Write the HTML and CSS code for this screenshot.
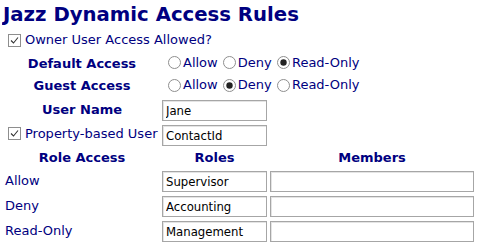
FILE: index.html
```html
<!DOCTYPE html>
<html lang="en">
<head>
    <meta charset="UTF-8">
    <meta name="viewport" content="width=device-width, initial-scale=1.0">
    <title>Jazz Dynamic Access Rules</title>
    <link rel="stylesheet" href="styles.css">
</head>
<body>
    <h1>Jazz Dynamic Access Rules</h1>
    <table class="rules">
        <tr class="first">
            <td colspan="3">
                <label class="check">
                    <svg class="box" width="13" height="13" viewBox="0 0 13 13"><rect x="0.5" y="0.5" width="12" height="12" fill="#fff" stroke="#8e8e8e"/><path d="M3 6.5 L5.5 9 L10 3.5" fill="none" stroke="#333" stroke-width="1.1"/></svg>
                    Owner User Access Allowed?
                </label>
            </td>
        </tr>
        <tr class="short">
            <th>Default Access</th>
            <td colspan="2" class="radios">
                <label><svg class="dot" width="13" height="13" viewBox="0 0 13 13"><circle cx="6.5" cy="6.5" r="6" fill="#fff" stroke="#8e8e8e"/></svg>Allow</label>
                <label><svg class="dot" width="13" height="13" viewBox="0 0 13 13"><circle cx="6.5" cy="6.5" r="6" fill="#fff" stroke="#8e8e8e"/></svg>Deny</label>
                <label><svg class="dot" width="13" height="13" viewBox="0 0 13 13"><circle cx="6.5" cy="6.5" r="6" fill="#fff" stroke="#8e8e8e"/><circle cx="6.5" cy="6.5" r="3.2" fill="#222"/></svg>Read-Only</label>
            </td>
        </tr>
        <tr class="short">
            <th>Guest Access</th>
            <td colspan="2" class="radios">
                <label><svg class="dot" width="13" height="13" viewBox="0 0 13 13"><circle cx="6.5" cy="6.5" r="6" fill="#fff" stroke="#8e8e8e"/></svg>Allow</label>
                <label><svg class="dot" width="13" height="13" viewBox="0 0 13 13"><circle cx="6.5" cy="6.5" r="6" fill="#fff" stroke="#8e8e8e"/><circle cx="6.5" cy="6.5" r="3.2" fill="#222"/></svg>Deny</label>
                <label><svg class="dot" width="13" height="13" viewBox="0 0 13 13"><circle cx="6.5" cy="6.5" r="6" fill="#fff" stroke="#8e8e8e"/></svg>Read-Only</label>
            </td>
        </tr>
        <tr>
            <th>User Name</th>
            <td><input type="text" class="field" value="Jane"></td>
            <td></td>
        </tr>
        <tr>
            <td>
                <label class="check">
                    <svg class="box" width="13" height="13" viewBox="0 0 13 13"><rect x="0.5" y="0.5" width="12" height="12" fill="#fff" stroke="#8e8e8e"/><path d="M3 6.5 L5.5 9 L10 3.5" fill="none" stroke="#333" stroke-width="1.1"/></svg>
                    Property-based User
                </label>
            </td>
            <td><input type="text" class="field" value="ContactId"></td>
            <td></td>
        </tr>
        <tr class="heads">
            <th>Role Access</th>
            <th>Roles</th>
            <th>Members</th>
        </tr>
        <tr>
            <td class="role">Allow</td>
            <td><input type="text" class="field" value="Supervisor"></td>
            <td><input type="text" class="field wide" value=""></td>
        </tr>
        <tr>
            <td class="role">Deny</td>
            <td><input type="text" class="field" value="Accounting"></td>
            <td><input type="text" class="field wide" value=""></td>
        </tr>
        <tr>
            <td class="role">Read-Only</td>
            <td><input type="text" class="field" value="Management"></td>
            <td><input type="text" class="field wide" value=""></td>
        </tr>
    </table>
</body>
</html>
```

FILE: styles.css
```css
body {
    margin: 0 2px;
    font-family: "DejaVu Sans", Verdana, sans-serif;
    font-size: 13px;
    color: #000080;
    background-color: #fff;
}

h1 {
    margin: 0;
    font-size: 19.7px;
    line-height: 30px;
    padding-left: 1px;
    color: #000080;
}

.rules {
    border-collapse: separate;
    border-spacing: 3px 4px;
    margin-top: -2px;
}

.rules td, .rules th {
    padding: 0;
    height: 21px;
    line-height: 16px;
    white-space: nowrap;
}

.rules .short td, .rules .short th {
    height: 18px;
}

.rules .first td {
    height: 16px;
}

.rules .heads th {
    height: 17px;
}

.rules th {
    width: 154px;
    text-align: center;
    font-weight: bold;
}

.rules th + th {
    width: 105px;
}

.rules th + th + th {
    width: 204px;
}

.check {
    display: inline-flex;
    align-items: center;
    gap: 4px;
    margin-left: 3px;
}

.radios {
    padding-left: 6px !important;
}

.radios label {
    display: inline-flex;
    align-items: center;
    gap: 2px;
    margin-right: 1px;
}

.role {
    text-align: left;
}

.field {
    box-sizing: border-box;
    width: 105px;
    height: 21px;
    margin: 0;
    padding: 0 3px;
    border: 1px solid #a6a6a6;
    box-shadow: inset 1px 1px 0 #e4e4e4;
    font-family: "DejaVu Sans Condensed", "DejaVu Sans", sans-serif;
    font-size: 13px;
    color: #000;
    display: block;
}

.wide {
    width: 204px;
}
```
